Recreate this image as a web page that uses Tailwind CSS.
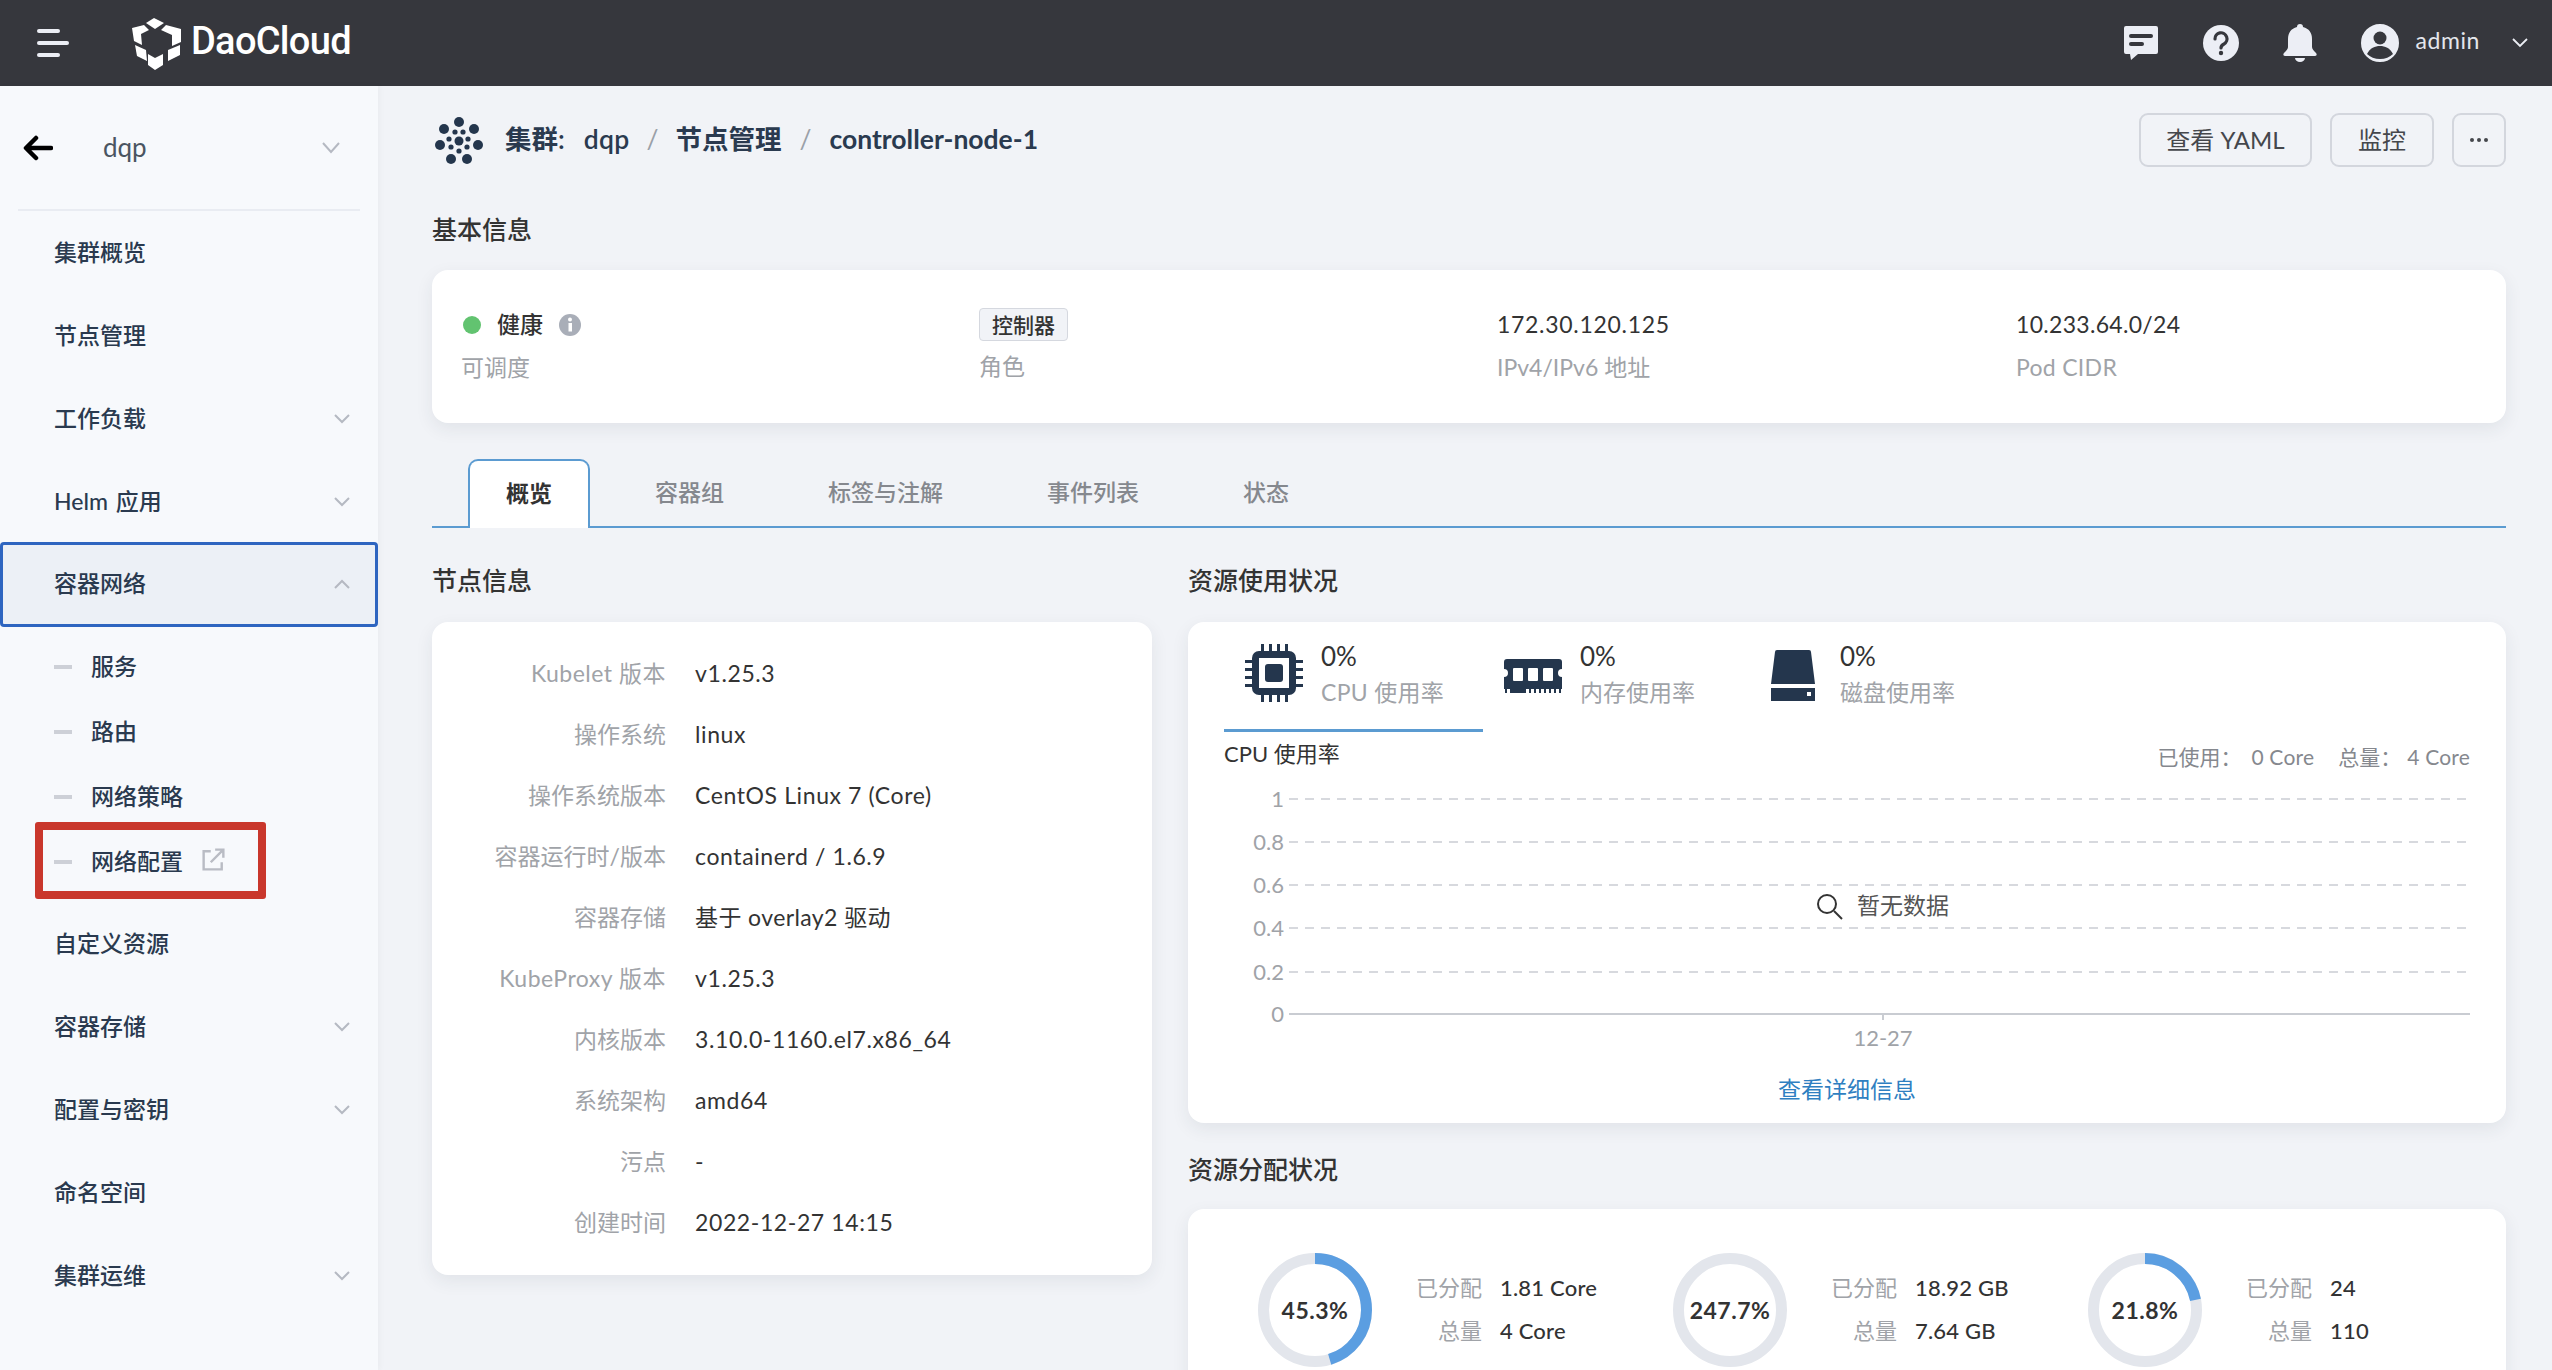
<!DOCTYPE html>
<html lang="zh-CN">
<head>
    <meta charset="UTF-8" />
    <title>DaoCloud 节点详情</title>
    <script src="https://cdn.jsdelivr.net/npm/@tailwindcss/browser@4"></script>
</head>
<body class="bg-[#f1f3f7] font-['Lato','Noto_Sans_CJK_SC',sans-serif] text-[23px] text-[#333]">
<div class="h-[1370px] overflow-hidden flex flex-col">

    <!-- top bar -->
    <header class="h-[86px] shrink-0 bg-[#36373d] flex items-center">
        <div class="w-[129px] pl-[37px]">
            <div class="flex flex-col gap-[8px] w-[32px]">
                <span class="block w-[23px] h-[4px] rounded bg-[#eceef5]"></span>
                <span class="block w-[32px] h-[4px] rounded bg-[#eceef5]"></span>
                <span class="block w-[23px] h-[4px] rounded bg-[#eceef5]"></span>
            </div>
        </div>
        <svg class="w-[53px] h-[54px]" viewBox="9 8 53 54" fill="#fff">
            <path d="M26 15l8-5 10 5-9 6z"/>
            <path d="M12 20l12-3 5 5-8 4 1 11-8-4z"/>
            <path d="M46 17l15 4v13l-9 4V27l-11-5z"/>
            <path d="M15 37l11 5 1 11-10-5z"/>
            <path d="M28 46l7 4 8-4v11l-8 5-7-5z"/>
            <path d="M60 37v10l-12 6V42z"/>
        </svg>
        <span class="ml-[9px] -mt-[4px] text-[38px] font-medium text-white font-['Roboto',sans-serif] tracking-[-0.7px]">DaoCloud</span>

        <div class="ml-auto flex items-center text-[#eceef5]">
            <svg class="w-[36px] h-[36px]" viewBox="0 0 36 36" fill="#eceef5">
                <path d="M3 1h30a2 2 0 0 1 2 2v24a2 2 0 0 1-2 2H15l-7 6-1-6H3a2 2 0 0 1-2-2V3a2 2 0 0 1 2-2z"/>
                <rect x="6" y="9" width="24" height="4" rx="2" fill="#36373d"/>
                <rect x="6" y="17" width="15" height="4" rx="2" fill="#36373d"/>
            </svg>
            <svg class="ml-[44px] w-[36px] h-[36px]" viewBox="0 0 36 36">
                <circle cx="18" cy="18" r="18" fill="#eceef5"/>
                <path d="M12 14a6 6 0 1 1 9 5c-2 1-3 2-3 4" fill="none" stroke="#36373d" stroke-width="3.2" stroke-linecap="round"/>
                <circle cx="18" cy="28" r="2.2" fill="#36373d"/>
            </svg>
            <svg class="ml-[44px] w-[34px] h-[38px]" viewBox="0 0 34 38" fill="#eceef5">
                <path d="M17 0a3 3 0 0 1 3 3c6 1.500 9 6 9 12v8c0 2 2 4 4 6 1 1 1 3-1 3H2c-2 0-2-2-1-3 2-2 4-4 4-6v-8c0-6 3-10.500 9-12a3 3 0 0 1 3-3z"/>
                <path d="M12 34h10a5 4 0 0 1-10 0z"/>
            </svg>
            <svg class="ml-[44px] w-[38px] h-[38px]" viewBox="0 0 38 38">
                <circle cx="19" cy="19" r="17.500" fill="none" stroke="#eceef5" stroke-width="3"/>
                <circle cx="19" cy="19" r="17" fill="#eceef5"/>
                <circle cx="19" cy="14" r="6.500" fill="#36373d"/>
                <path d="M6 30c3-6 8-8 13-8s10 2 13 8c-3 3-8 5-13 5s-10-2-13-5z" fill="#36373d"/>
            </svg>
            <span class="ml-[16px] -mt-[5px] text-[23px] text-[#e4e6ec] tracking-[0.6px]">admin</span>
            <svg class="ml-[32px] mr-[24px] w-[16px] h-[10px]" viewBox="0 0 16 10" fill="none" stroke="#eceef5" stroke-width="1.800">
                <path d="M1 1l7 7 7-7"/>
            </svg>
        </div>
    </header>

    <div class="flex flex-1 min-h-0">

        <!-- sidebar -->
        <aside class="w-[378px] shrink-0 bg-[#f7f9fc] shadow-[2px_0_6px_rgba(0,0,0,0.03)] text-[#2a3a4f] font-medium">
            <div class="mx-[18px] h-[125px] border-b-2 border-[#e9ecf2] flex items-center">
                <svg class="ml-[5px] w-[30px] h-[26px]" viewBox="0 0 30 26" fill="none" stroke="#000" stroke-width="4.500" stroke-linecap="round" stroke-linejoin="round">
                    <path d="M28 13H4M13 3L3 13l10 10"/>
                </svg>
                <span class="ml-[50px] font-normal text-[26px] text-[#4a5561]">dqp</span>
                <svg class="ml-auto mr-[20px] w-[18px] h-[12px]" viewBox="0 0 18 12" fill="none" stroke="#b5b9c2" stroke-width="2"><path d="M1 1l8 9 8-9"/></svg>
            </div>

            <div class="h-[83px] pl-[54px] flex items-center">集群概览</div>
            <div class="h-[83px] pl-[54px] flex items-center">节点管理</div>
            <div class="h-[83px] pl-[54px] pr-[28px] flex items-center justify-between">工作负载
                <svg class="w-[16px] h-[10px]" viewBox="0 0 16 10" fill="none" stroke="#b5b9c2" stroke-width="2"><path d="M1 1l7 7 7-7"/></svg>
            </div>
            <div class="h-[83px] pl-[54px] pr-[28px] flex items-center justify-between"><span>Helm <span class="ml-[2px]">应用</span></span>
                <svg class="w-[16px] h-[10px]" viewBox="0 0 16 10" fill="none" stroke="#b5b9c2" stroke-width="2"><path d="M1 1l7 7 7-7"/></svg>
            </div>
            <div class="-mt-[1px] h-[85px] pl-[51px] pr-[25px] pb-[2px] flex items-center justify-between bg-[#ecf0f6] border-[3px] border-[#2e65c0] rounded-[4px]">容器网络
                <svg class="w-[16px] h-[10px]" viewBox="0 0 16 10" fill="none" stroke="#b5b9c2" stroke-width="2"><path d="M1 9l7-7 7 7"/></svg>
            </div>

            <div class="pt-[7px] pb-[8px]">
                <div class="h-[65px] pl-[54px] flex items-center"><span class="w-[18px] h-[4px] bg-[#cdd0d7] mr-[19px]"></span>服务</div>
                <div class="h-[65px] pl-[54px] flex items-center"><span class="w-[18px] h-[4px] bg-[#cdd0d7] mr-[19px]"></span>路由</div>
                <div class="h-[65px] pl-[54px] flex items-center"><span class="w-[18px] h-[4px] bg-[#cdd0d7] mr-[19px]"></span>网络策略</div>
                <div class="relative h-[65px] pl-[54px] flex items-center"><span class="w-[18px] h-[4px] bg-[#cdd0d7] mr-[19px]"></span>网络配置
                    <svg class="ml-[19px] -mt-[4px] w-[23px] h-[23px]" viewBox="0 0 21 21" fill="none" stroke="#b9bcc4" stroke-width="2.200">
                        <path d="M8 3H1.500v16.500H18V13M12 1.500h7.500V9M19 2L8 13"/>
                    </svg>
                    <span class="absolute left-[35px] top-[-7px] w-[231px] h-[77px] border-[8px] border-[#c9372c] rounded-[3px]"></span>
                </div>
            </div>

            <div class="h-[83px] pl-[54px] flex items-center">自定义资源</div>
            <div class="h-[83px] pl-[54px] pr-[28px] flex items-center justify-between">容器存储
                <svg class="w-[16px] h-[10px]" viewBox="0 0 16 10" fill="none" stroke="#b5b9c2" stroke-width="2"><path d="M1 1l7 7 7-7"/></svg>
            </div>
            <div class="h-[83px] pl-[54px] pr-[28px] flex items-center justify-between">配置与密钥
                <svg class="w-[16px] h-[10px]" viewBox="0 0 16 10" fill="none" stroke="#b5b9c2" stroke-width="2"><path d="M1 1l7 7 7-7"/></svg>
            </div>
            <div class="h-[83px] pl-[54px] flex items-center">命名空间</div>
            <div class="h-[83px] pl-[54px] pr-[28px] flex items-center justify-between">集群运维
                <svg class="w-[16px] h-[10px]" viewBox="0 0 16 10" fill="none" stroke="#b5b9c2" stroke-width="2"><path d="M1 1l7 7 7-7"/></svg>
            </div>
        </aside>

        <!-- main -->
        <main class="flex-1 min-w-0 pl-[54px] pr-[46px]">

            <div class="mt-[27px] h-[54px] flex items-center">
                <svg class="-ml-[7px] w-[70px] h-[70px] shrink-0" viewBox="0 0 70 70" fill="#24364d">
                    <circle cx="34" cy="17" r="5"/><circle cx="19" cy="24" r="5"/><circle cx="49" cy="24" r="5"/>
                    <circle cx="15" cy="40" r="5"/><circle cx="53" cy="40" r="5"/><circle cx="26" cy="54" r="5"/><circle cx="42" cy="54" r="5"/>
                    <circle cx="34" cy="36" r="4.500"/>
                    <circle cx="30" cy="27" r="2.600"/><circle cx="38" cy="27" r="2.600"/><circle cx="24" cy="34" r="2.600"/><circle cx="43" cy="34" r="2.600"/>
                    <circle cx="26" cy="42" r="2.600"/><circle cx="42" cy="42" r="2.600"/><circle cx="34" cy="46" r="2.600"/>
                </svg>
                <div class="ml-[10px] flex items-center text-[26.5px] font-semibold text-[#2a3a4f]">
                    <span>集群:</span><span class="ml-[19px] tracking-[0.3px]">dqp</span>
                    <span class="mx-[17px] font-normal text-[#9aa0a8]">/</span><span>节点管理</span>
                    <span class="mx-[18px] font-normal text-[#9aa0a8]">/</span><span class="font-bold">controller-node-1</span>
                </div>
                <div class="ml-auto flex gap-[18px] text-[24px] text-[#45474c]">
                    <button class="h-[54px] w-[173px] rounded-[9px] border-2 border-[#d3d6dd]">查看 YAML</button>
                    <button class="h-[54px] w-[104px] rounded-[9px] border-2 border-[#d3d6dd]">监控</button>
                    <button class="h-[54px] w-[54px] rounded-[9px] border-2 border-[#d3d6dd] flex items-center justify-center gap-[3px]">
                        <span class="w-[4px] h-[4px] rounded-full bg-[#45474c]"></span><span class="w-[4px] h-[4px] rounded-full bg-[#45474c]"></span><span class="w-[4px] h-[4px] rounded-full bg-[#45474c]"></span>
                    </button>
                </div>
            </div>

            <h2 class="mt-[46px] h-[32px] leading-[32px] text-[25px] font-medium">基本信息</h2>

            <section class="mt-[25px] h-[153px] pl-[29px] bg-white rounded-[16px] shadow-[0_6px_18px_rgba(40,50,70,0.08)] grid grid-cols-[518px_518px_519px_1fr] items-start pt-[38px]">
                <div>
                    <div class="h-[33px] flex items-center font-medium">
                        <span class="ml-[2px] w-[18px] h-[18px] rounded-full bg-[#62c370]"></span>
                        <span class="ml-[16px]">健康</span>
                        <svg class="ml-[16px] w-[22px] h-[22px]" viewBox="0 0 22 22"><circle cx="11" cy="11" r="11" fill="#a9aeb8"/><rect x="9.500" y="9" width="3.500" height="8.500" fill="#fff"/><circle cx="11" cy="5.500" r="2" fill="#fff"/></svg>
                    </div>
                    <div class="mt-[9px] text-[#a0a3a8]">可调度</div>
                </div>
                <div>
                    <span class="flex w-fit h-[33px] px-[12px] items-center text-[21px] font-medium bg-[#f1f3f7] border border-[#d5d8df] rounded-[4px]">控制器</span>
                    <div class="mt-[8px] text-[#a0a3a8]">角色</div>
                </div>
                <div>
                    <div class="h-[33px] flex items-center tracking-[0.7px]">172.30.120.125</div>
                    <div class="mt-[9px] text-[#a0a3a8]">IPv4/IPv6 地址</div>
                </div>
                <div>
                    <div class="h-[33px] flex items-center tracking-[0.3px]">10.233.64.0/24</div>
                    <div class="mt-[9px] text-[#a0a3a8] tracking-[0.3px]">Pod CIDR</div>
                </div>
            </section>

            <nav class="mt-[36px] h-[69px] flex items-end gap-[30px] pl-[36px] border-b-2 border-[#5b9bd1] text-[#85888e] font-medium">
                <div class="-mb-[2px] mr-[-2px] h-[69px] px-[36px] pb-[3px] flex items-center bg-white border-2 border-b-0 border-[#5b9bd1] rounded-t-[10px] text-[#333] font-semibold">概览</div>
                <div class="h-[67px] px-[37px] flex items-center">容器组</div>
                <div class="h-[67px] px-[37px] flex items-center">标签与注解</div>
                <div class="h-[67px] px-[37px] flex items-center">事件列表</div>
                <div class="h-[67px] px-[37px] flex items-center">状态</div>
            </nav>

            <div class="mt-[36px] flex items-start gap-[36px]">

                <div class="w-[720px] shrink-0">
                    <h2 class="h-[32px] leading-[32px] text-[25px] font-medium">节点信息</h2>
                    <section class="mt-[26px] h-[653px] pt-[21px] bg-white rounded-[16px] shadow-[0_6px_18px_rgba(40,50,70,0.08)] grid grid-cols-[234px_1fr] gap-x-[29px] auto-rows-[61px] items-center">
                        <div class="text-right text-[#a0a3a8] tracking-[0.5px]">Kubelet 版本</div><div class="tracking-[0.6px]">v1.25.3</div>
                        <div class="text-right text-[#a0a3a8]">操作系统</div><div class="tracking-[0.6px]">linux</div>
                        <div class="text-right text-[#a0a3a8]">操作系统版本</div><div class="tracking-[0.6px]">CentOS Linux 7 (Core)</div>
                        <div class="text-right text-[#a0a3a8]">容器运行时/版本</div><div class="tracking-[0.6px]">containerd / 1.6.9</div>
                        <div class="text-right text-[#a0a3a8]">容器存储</div><div class="tracking-[0.4px]">基于 overlay2 驱动</div>
                        <div class="text-right text-[#a0a3a8] tracking-[0.5px]">KubeProxy 版本</div><div class="tracking-[0.6px]">v1.25.3</div>
                        <div class="text-right text-[#a0a3a8]">内核版本</div><div class="tracking-[0.6px]">3.10.0-1160.el7.x86_64</div>
                        <div class="text-right text-[#a0a3a8]">系统架构</div><div class="tracking-[0.6px]">amd64</div>
                        <div class="text-right text-[#a0a3a8]">污点</div><div>-</div>
                        <div class="text-right text-[#a0a3a8]">创建时间</div><div class="tracking-[0.6px]">2022-12-27 14:15</div>
                    </section>
                </div>

                <div class="flex-1 min-w-0">
                    <h2 class="h-[32px] leading-[32px] text-[25px] font-medium">资源使用状况</h2>
                    <section class="mt-[26px] h-[501px] bg-white rounded-[16px] shadow-[0_6px_18px_rgba(40,50,70,0.08)]">
                        <div class="ml-[36px] flex h-[110px]">
                            <div class="w-[259px] h-[110px] pl-[21px] flex items-start pt-[22px] border-b-[3px] border-[#5b9bd1]">
                                <svg class="w-[58px] h-[58px] shrink-0" viewBox="0 0 58 58" fill="#24364d">
                                    <path d="M14 7h30a7 7 0 0 1 7 7v30a7 7 0 0 1-7 7H14a7 7 0 0 1-7-7V14a7 7 0 0 1 7-7z"/>
                                    <rect x="14" y="14" width="30" height="30" fill="#fff"/>
                                    <rect x="20" y="20" width="18" height="18" rx="3"/>
                                    <path d="M16 0h3v8h-3zM24 0h3v8h-3zM32 0h3v8h-3zM40 0h3v8h-3zM16 50h3v8h-3zM24 50h3v8h-3zM32 50h3v8h-3zM40 50h3v8h-3zM0 16h8v3H0zM0 24h8v3H0zM0 32h8v3H0zM0 40h8v3H0zM50 16h8v3h-8zM50 24h8v3h-8zM50 32h8v3h-8zM50 40h8v3h-8z"/>
                                </svg>
                                <div class="ml-[18px] -mt-[5px]">
                                    <div class="h-[34px] leading-[34px] text-[26px]">0%</div>
                                    <div class="h-[38px] leading-[38px] text-[#a0a3a8] tracking-[0.3px]">CPU 使用率</div>
                                </div>
                            </div>
                            <div class="w-[259px] pl-[21px] flex items-start pt-[22px]">
                                <svg class="mt-[15px] w-[58px] h-[34px] shrink-0" viewBox="0 0 58 34" fill="#24364d">
                                    <path d="M3 0h52a3 3 0 0 1 3 3v7a4 4 0 0 0 0 8v12h-1v4h-2v-4h-3v4h-2v-4h-3v4h-2v-4h-3v4h-2v-4h-3v4h-2v-4h-3v4h-2v-4h-3v4h-2v-4h-3v4H6v-4H3v4H1v-4H0V18a4 4 0 0 0 0-8V3a3 3 0 0 1 3-3z"/>
                                    <rect x="9" y="9" width="10" height="13" rx="1" fill="#fff"/><rect x="24" y="9" width="10" height="13" rx="1" fill="#fff"/><rect x="39" y="9" width="10" height="13" rx="1" fill="#fff"/>
                                </svg>
                                <div class="ml-[18px] -mt-[5px]">
                                    <div class="h-[34px] leading-[34px] text-[26px]">0%</div>
                                    <div class="h-[38px] leading-[38px] text-[#a0a3a8]">内存使用率</div>
                                </div>
                            </div>
                            <div class="w-[259px] pl-[29px] flex items-start pt-[22px]">
                                <svg class="mt-[6px] w-[44px] h-[51px] shrink-0" viewBox="0 0 44 51" fill="#24364d">
                                    <path d="M6 0h32a2 2 0 0 1 2 2l4 32H0L4 2a2 2 0 0 1 2-2z"/>
                                    <path d="M0 38h44v13H0z"/><rect x="36" y="42" width="4" height="4" fill="#fff"/>
                                </svg>
                                <div class="ml-[25px] -mt-[5px]">
                                    <div class="h-[34px] leading-[34px] text-[26px]">0%</div>
                                    <div class="h-[38px] leading-[38px] text-[#a0a3a8]">磁盘使用率</div>
                                </div>
                            </div>
                        </div>
                        <div class="mx-[36px] h-[46px] flex items-center justify-between">
                            <span class="-mt-[3px] text-[22px]">CPU 使用率</span>
                            <span class="mt-[3px] flex text-[21px] text-[#85888e]">
                                <span>已使用：</span><span class="ml-[10px] tracking-[0.2px]">0 Core</span>
                                <span class="ml-[24px]">总量：</span><span class="ml-[6px] tracking-[0.2px]">4 Core</span>
                            </span>
                        </div>
                        <svg class="block w-[1318px] h-[283px]" viewBox="0 0 1318 283" font-size="22" fill="#a0a3a8">
                            <g stroke="#d7d9de" stroke-width="2" stroke-dasharray="9 7">
                                <path d="M101 21H1282M101 64H1282M101 107H1282M101 150H1282M101 194H1282"/>
                            </g>
                            <path d="M101 236H1282M695 236v6" stroke="#c9ccd2" stroke-width="2"/>
                            <text x="96" y="29" text-anchor="end">1</text>
                            <text x="96" y="72" text-anchor="end">0.8</text>
                            <text x="96" y="115" text-anchor="end">0.6</text>
                            <text x="96" y="158" text-anchor="end">0.4</text>
                            <text x="96" y="202" text-anchor="end">0.2</text>
                            <text x="96" y="244" text-anchor="end">0</text>
                            <text x="695" y="268" text-anchor="middle">12-27</text>
                            <circle cx="639" cy="126" r="9" fill="none" stroke="#333" stroke-width="2"/>
                            <path d="M646 133l8 8" stroke="#333" stroke-width="2"/>
                            <text x="669" y="136" fill="#555" font-size="23">暂无数据</text>
                        </svg>
                        <div class="mt-[5px] h-[46px] text-center leading-[46px] text-[#2f7fc1]">查看详细信息</div>
                    </section>

                    <h2 class="mt-[30px] h-[32px] leading-[32px] text-[25px] font-medium">资源分配状况</h2>
                    <section class="mt-[24px] h-[300px] pt-[44px] pl-[70px] bg-white rounded-[16px] shadow-[0_6px_18px_rgba(40,50,70,0.08)] flex items-start">
                        <div class="w-[415px] shrink-0 flex items-center">
                            <div class="relative w-[114px] h-[114px] flex items-center justify-center font-bold tracking-[0.5px]">
                                <svg class="absolute inset-0" viewBox="0 0 114 114" fill="none" stroke-width="11"><circle cx="57" cy="57" r="51.500" stroke="#e3e6ec"/><circle cx="57" cy="57" r="51.500" stroke="#5b9ee1" stroke-dasharray="146.600 323.600" transform="rotate(-90 57 57)"/></svg>
                                <span>45.3%</span>
                            </div>
                            <div class="-mt-[2px] grid grid-cols-[110px_1fr] gap-x-[18px] auto-rows-[43px] items-center">
                                <span class="text-right text-[#a0a3a8] text-[22px]">已分配</span><span class="font-medium text-[22px] tracking-[0.2px]">1.81 Core</span>
                                <span class="text-right text-[#a0a3a8] text-[22px]">总量</span><span class="font-medium text-[22px] tracking-[0.2px]">4 Core</span>
                            </div>
                        </div>
                        <div class="w-[415px] shrink-0 flex items-center">
                            <div class="relative w-[114px] h-[114px] flex items-center justify-center font-bold tracking-[0.5px]">
                                <svg class="absolute inset-0" viewBox="0 0 114 114" fill="none" stroke-width="11"><circle cx="57" cy="57" r="51.500" stroke="#e3e6ec"/></svg>
                                <span>247.7%</span>
                            </div>
                            <div class="-mt-[2px] grid grid-cols-[110px_1fr] gap-x-[18px] auto-rows-[43px] items-center">
                                <span class="text-right text-[#a0a3a8] text-[22px]">已分配</span><span class="font-medium text-[22px] tracking-[0.2px]">18.92 GB</span>
                                <span class="text-right text-[#a0a3a8] text-[22px]">总量</span><span class="font-medium text-[22px] tracking-[0.2px]">7.64 GB</span>
                            </div>
                        </div>
                        <div class="w-[415px] shrink-0 flex items-center">
                            <div class="relative w-[114px] h-[114px] flex items-center justify-center font-bold tracking-[0.5px]">
                                <svg class="absolute inset-0" viewBox="0 0 114 114" fill="none" stroke-width="11"><circle cx="57" cy="57" r="51.500" stroke="#e3e6ec"/><circle cx="57" cy="57" r="51.500" stroke="#5b9ee1" stroke-dasharray="70.500 323.600" transform="rotate(-90 57 57)"/></svg>
                                <span>21.8%</span>
                            </div>
                            <div class="-mt-[2px] grid grid-cols-[110px_1fr] gap-x-[18px] auto-rows-[43px] items-center">
                                <span class="text-right text-[#a0a3a8] text-[22px]">已分配</span><span class="font-medium text-[22px] tracking-[0.2px]">24</span>
                                <span class="text-right text-[#a0a3a8] text-[22px]">总量</span><span class="font-medium text-[22px] tracking-[0.2px]">110</span>
                            </div>
                        </div>
                    </section>
                </div>
            </div>
        </main>
    </div>
</div>
</body>
</html>
